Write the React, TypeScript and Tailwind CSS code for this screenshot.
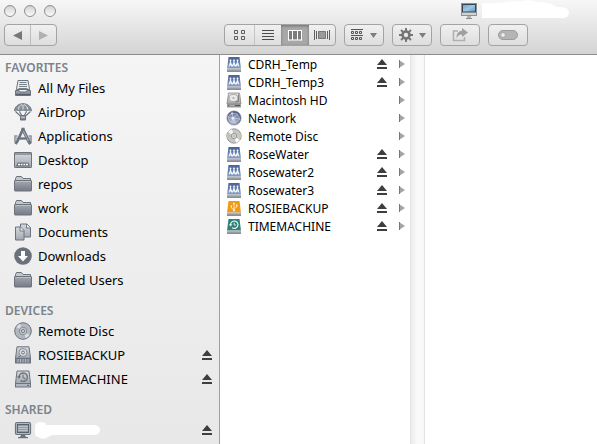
import React, { useState } from "react";

type IconProps = { className?: string };

const TONE = "#6b737e";

function Gradients() {
  return (
    <svg className="absolute h-0 w-0" aria-hidden="true">
      <defs>
        <linearGradient id="slate" x1="0" y1="0" x2="0" y2="1">
          <stop offset="0" stopColor="#a4a9b1" />
          <stop offset="1" stopColor="#747b85" />
        </linearGradient>
        <linearGradient id="pale" x1="0" y1="0" x2="0" y2="1">
          <stop offset="0" stopColor="#d6d9dd" />
          <stop offset="1" stopColor="#a3a9b1" />
        </linearGradient>
        <linearGradient id="blue" x1="0" y1="0" x2="0" y2="1">
          <stop offset="0" stopColor="#456397" />
          <stop offset="1" stopColor="#86a0c8" />
        </linearGradient>
        <linearGradient id="metal" x1="0" y1="0" x2="0" y2="1">
          <stop offset="0" stopColor="#e2e2e2" />
          <stop offset="1" stopColor="#a5a5a5" />
        </linearGradient>
        <radialGradient id="globe" cx="0.45" cy="0.7" r="0.7">
          <stop offset="0" stopColor="#c3c9dc" />
          <stop offset="0.6" stopColor="#7d87a8" />
          <stop offset="1" stopColor="#4a5478" />
        </radialGradient>
        <linearGradient id="screen" x1="0" y1="0" x2="1" y2="1">
          <stop offset="0" stopColor="#6ba0c8" />
          <stop offset="0.5" stopColor="#9cc9e6" />
          <stop offset="1" stopColor="#5a91bd" />
        </linearGradient>
      </defs>
    </svg>
  );
}

function SideIcon({ children }: { children: React.ReactNode }) {
  return (
    <svg viewBox="0 0 18 18" className="h-[18px] w-[18px] shrink-0" fill="none" aria-hidden="true">
      {children}
    </svg>
  );
}

const AllFiles = () => (
  <SideIcon>
    <path d="M4 1.500h10l1.600 9H2.400z" fill="#eceef0" stroke={TONE} />
    <path d="M5.500 3.500h7M5 5.500h8M5 7.500h8M4.500 9.500h9" stroke={TONE} strokeWidth="0.900" />
    <path d="M1.500 11.500h3.500l1 1.500h6l1-1.500h3.500v5h-15z" fill="url(#slate)" stroke={TONE} />
    <path d="M2 15.500h14" stroke="#555d68" />
  </SideIcon>
);
const AirDrop = () => (
  <SideIcon>
    <path d="M.6 7.800C.8 3.600 4.400.7 9 .7s8.200 2.900 8.400 7.100C16 6.700 14 6.800 12.600 8 11.300 6.800 6.700 6.800 5.400 8 4 6.800 2 6.700.6 7.800z" fill="#8b929b" stroke={TONE} />
    <path d="M8 1.500C5.500 2.500 4.500 4.500 4.300 6.500M10 1.500c2.500 1 3.500 3 3.700 5M9 1.500V6.500" stroke="#dfe2e5" strokeWidth="1" />
    <path d="M1.500 8.500l5.500 5M16.500 8.500l-5.500 5M5.500 8.500l2.500 4.500M12.500 8.500L10 13" stroke={TONE} strokeWidth="1.100" />
    <path d="M6.500 12.500h5v4.500h-5z" fill="url(#slate)" stroke={TONE} />
    <path d="M7 14.500h4" stroke="#cdd1d5" strokeWidth="0.700" />
  </SideIcon>
);
const Apps = () => (
  <SideIcon>
    <path d="M1 15.500V9h2.500M17 15.500V9h-2.500" stroke="#8d949d" strokeWidth="1.600" />
    <path d="M.5 11.500h17" stroke="#a3a9b1" strokeWidth="2" />
    <path d="M9 2L3.500 14 1.500 17" stroke={TONE} strokeWidth="2.600" />
    <path d="M8.500 1.500L14.500 14l2 3" stroke={TONE} strokeWidth="3.200" />
    <path d="M9.400 4l5 10" stroke="#b4bac1" strokeWidth="1" />
    <path d="M5 11.500h8" stroke={TONE} strokeWidth="2" />
    <path d="M7.500 1.500h3" stroke={TONE} strokeWidth="1.500" />
  </SideIcon>
);
const Desktop = () => (
  <SideIcon>
    <rect x="0.500" y="1.500" width="17" height="15" rx="0.500" fill="url(#pale)" stroke={TONE} />
    <path d="M1 3h16" stroke={TONE} strokeWidth="1.200" />
    <path d="M3.500 11.500h11l1.500 4H2z" fill="#6b737e" />
    <path d="M4 13.500h2M6.800 13.500h1.700M9.500 13.500h1.700M12 13.500h2" stroke="#fff" strokeWidth="1.600" />
  </SideIcon>
);
const Folder = () => (
  <SideIcon>
    <path d="M1.500 5.500v-2l1-2h5l1.500 2h7.500v2z" fill="#c3c7cc" stroke={TONE} />
    <rect x="0.500" y="5.500" width="17" height="10.500" rx="0.500" fill="url(#slate)" stroke={TONE} />
    <path d="M1.200 6.500h15.600" stroke="#c3c7cc" strokeWidth="0.800" />
  </SideIcon>
);
const Docs = () => (
  <SideIcon>
    <path d="M6.500 1h6.500l3.500 3.500V14h-10z" fill="url(#pale)" stroke={TONE} />
    <path d="M12.500 1v4h4" fill="#e9ebed" stroke={TONE} strokeWidth="0.900" />
    <path d="M1.500 4h5L10 7.500V17H1.500z" fill="url(#pale)" stroke={TONE} />
    <path d="M6 4v4h4" fill="#e9ebed" stroke={TONE} strokeWidth="0.900" />
  </SideIcon>
);
const Down = () => (
  <SideIcon>
    <circle cx="9" cy="9" r="8.800" fill="#69717c" />
    <path d="M7 4h4v5h3l-5 5.500L4 9h3z" fill="#fff" />
  </SideIcon>
);
const Disc = () => (
  <SideIcon>
    <circle cx="9" cy="9" r="8.300" fill="#b3b8bf" stroke={TONE} />
    <path d="M9 9L2.500 5A8 8 0 0 1 6 1.800zM9 9l6.500 4a8 8 0 0 1-3.500 3.200z" fill="#eceef0" opacity="0.700" />
    <circle cx="9" cy="9" r="3.800" stroke="#858d97" fill="#c3c7cc" />
    <circle cx="9" cy="9" r="1.500" fill="#eee" stroke={TONE} />
  </SideIcon>
);
const Drive = () => (
  <SideIcon>
    <path d="M3 .8h12l1.500 11.500H1.500z" fill="url(#pale)" stroke={TONE} />
    <circle cx="9" cy="6.500" r="4" fill="#dde0e3" stroke="#848c96" />
    <circle cx="9" cy="6.500" r="1.500" stroke={TONE} />
    <path d="M4 11.500l3-2" stroke={TONE} />
    <rect x="1.500" y="12.500" width="15" height="4.500" fill="#7b828c" stroke={TONE} />
    <path d="M4 13v3.500M6.500 13v3.500M9 13v3.500M11.500 13v3.500M14 13v3.500" stroke="#c6cace" strokeWidth="0.800" />
  </SideIcon>
);
const Clock = () => (
  <SideIcon>
    <path d="M3 1h12l1.500 12.500H1.500z" fill="url(#pale)" stroke={TONE} />
    <rect x="1.500" y="13.500" width="15" height="3.500" fill="#b3b8bf" stroke={TONE} />
    <path d="M5 7a4.200 4.200 0 1 1 1.500 3.400" stroke={TONE} strokeWidth="1.400" />
    <path d="M3 6.200h4L5 9z" fill={TONE} />
    <path d="M9 4.500v3l2.200 1.200" stroke={TONE} strokeWidth="1.100" />
    <path d="M13 15.300h2" stroke="#59616c" />
  </SideIcon>
);
const Monitor = () => (
  <SideIcon>
    <rect x="1.500" y="1.500" width="15" height="12" rx="1.500" fill="#b4bac1" stroke={TONE} strokeWidth="1.200" />
    <rect x="3.500" y="3.500" width="11" height="8" fill="#949ba4" stroke="#59616c" />
    <path d="M4 5.500h10M4 7.500h10M4 9.500h10" stroke="#c3c7cc" strokeWidth="0.900" />
    <path d="M7 14h4l1 2h2v1.300H4V16h2z" fill={TONE} />
  </SideIcon>
);

function SmallIcon({ children }: { children: React.ReactNode }) {
  return (
    <svg viewBox="0 0 16 16" className="h-4 w-4 shrink-0" fill="none" aria-hidden="true">
      {children}
    </svg>
  );
}
function DriveBase({ fill, children }: { fill: string; children: React.ReactNode }) {
  return (
    <SmallIcon>
      <path d="M2.500 1h11L15 13H1z" fill={fill} />
      <path d="M1 12.500h14V15.500H1z" fill="#a3a7ab" />
      <path d="M1 12.800h14" stroke="#dfe3e6" strokeWidth="0.700" />
      <path d="M1 15.300h14" stroke="#62666b" strokeWidth="0.800" />
      {children}
    </SmallIcon>
  );
}
const Server = () => (
  <DriveBase fill="url(#blue)">
    <path d="M4.500 4l.8 3 1.500 3.500H5.300L4.500 9l-.8 1.500H2.500L3.700 7zM8 4l.8 3 1.400 3.500H8.800L8 9l-.8 1.500H5.800L7.200 7zM11.500 4l.8 3 1.200 3.500h-1.200L11.500 9l-.8 1.500H9.200L10.700 7z" fill="#f3f7fc" />
    <circle cx="4.500" cy="4.500" r="0.900" fill="#fff" />
    <circle cx="8" cy="4.500" r="0.900" fill="#fff" />
    <circle cx="11.500" cy="4.500" r="0.900" fill="#fff" />
  </DriveBase>
);
const HardDisk = () => (
  <SmallIcon>
    <path d="M2.500 1h11L15 12H1z" fill="url(#metal)" stroke="#777" strokeWidth="0.700" />
    <ellipse cx="7.500" cy="6" rx="4.300" ry="3.600" fill="#e8e8e8" stroke="#a0a0a0" strokeWidth="0.800" />
    <circle cx="7.500" cy="6" r="1.100" fill="#aaa" />
    <path d="M12.500 2.500v7L9.500 10" stroke="#777" strokeWidth="0.900" />
    <path d="M1 11.500h14v4H1z" fill="#9a9a9a" />
    <path d="M2 13.500h12" stroke="#555" strokeWidth="1.200" />
    <path d="M3 13.500h6" stroke="#d4d4d4" strokeWidth="0.700" />
  </SmallIcon>
);
const Network = () => (
  <SmallIcon>
    <circle cx="8" cy="8" r="7.100" fill="url(#globe)" stroke="#5c6688" strokeWidth="0.500" />
    <path d="M2 7l4-4 5 1 3 5-5 4-5-1zM6 3l1 5 5-4M7 8l2 5M2.500 7L7 8l7 1" stroke="#dde2f0" strokeWidth="0.600" opacity="0.800" />
    <circle cx="6" cy="3.500" r="1.100" fill="#dbe1f0" />
    <circle cx="7" cy="8.200" r="1.300" fill="#eef1f8" />
  </SmallIcon>
);
const ColorDisc = () => (
  <SmallIcon>
    <circle cx="8" cy="8" r="7.200" fill="#c6c6c6" stroke="#858585" strokeWidth="0.800" />
    <path d="M8 8L2 4a7 7 0 0 1 4-2.700z" fill="#f5f5f5" />
    <path d="M8 8l6 4a7 7 0 0 1-4 2.700z" fill="#f7f7f7" />
    <path d="M8 8l6.800-2a7 7 0 0 1 0 3.600z" fill="#d3c9a2" />
    <path d="M8 8l-6.800 2a7 7 0 0 1 0-3.600z" fill="#b9c8b1" />
    <circle cx="8" cy="8" r="2.700" fill="#e5e5e5" stroke="#888" strokeWidth="0.800" />
    <circle cx="8" cy="8" r="1.100" fill="#fff" stroke="#888" strokeWidth="0.600" />
  </SmallIcon>
);
const Usb = () => (
  <DriveBase fill="#f09a16">
    <path d="M8 11V3.500M8 9.500L5.300 8V6M8 8.500l2.700-1.300V5" stroke="#ffe9b8" strokeWidth="0.900" />
    <path d="M6.700 4.300L8 2.300l1.300 2z" fill="#fff4d8" />
    <circle cx="8" cy="10.500" r="1" fill="#fff4d8" />
    <circle cx="5.300" cy="6" r="0.800" fill="#fff4d8" />
    <path d="M10 4.500h1.400V6H10z" fill="#fff4d8" />
  </DriveBase>
);
const TimeMachine = () => (
  <DriveBase fill="#2f7f78">
    <path d="M4.600 6.800A3.700 3.700 0 1 1 6 9.600" stroke="#e4f5f1" strokeWidth="1.200" />
    <path d="M2.800 6.200h3.500L4.600 8.600z" fill="#e4f5f1" />
    <path d="M8.200 4.700v2.300h1.900" stroke="#e4f5f1" strokeWidth="0.900" />
  </DriveBase>
);

function Eject({ className = "" }: IconProps) {
  return (
    <svg viewBox="0 0 10 10" className={`h-[10px] w-[10px] ${className}`} fill="#3e3e3e" aria-hidden="true">
      <path d="M5 0l5 6H0zM0 8h10v2H0z" />
    </svg>
  );
}

const favorites = [
  { name: "All My Files", Icon: AllFiles },
  { name: "AirDrop", Icon: AirDrop },
  { name: "Applications", Icon: Apps },
  { name: "Desktop", Icon: Desktop },
  { name: "repos", Icon: Folder },
  { name: "work", Icon: Folder },
  { name: "Documents", Icon: Docs },
  { name: "Downloads", Icon: Down },
  { name: "Deleted Users", Icon: Folder },
];
const devices = [
  { name: "Remote Disc", Icon: Disc },
  { name: "ROSIEBACKUP", Icon: Drive, eject: true },
  { name: "TIMEMACHINE", Icon: Clock, eject: true },
];
const shared = [{ name: "", Icon: Monitor, eject: true }];

const volumes = [
  { name: "CDRH_Temp", Icon: Server, eject: true },
  { name: "CDRH_Temp3", Icon: Server, eject: true },
  { name: "Macintosh HD", Icon: HardDisk },
  { name: "Network", Icon: Network },
  { name: "Remote Disc", Icon: ColorDisc },
  { name: "RoseWater", Icon: Server, eject: true },
  { name: "Rosewater2", Icon: Server, eject: true },
  { name: "Rosewater3", Icon: Server, eject: true },
  { name: "ROSIEBACKUP", Icon: Usb, eject: true },
  { name: "TIMEMACHINE", Icon: TimeMachine, eject: true },
];

type Place = { name: string; Icon: () => React.JSX.Element; eject?: boolean };

function Section({ title, places }: { title: string; places: Place[] }) {
  return (
    <section>
      <h2 className="h-[18px] pl-[5px] text-xs leading-5 font-semibold text-[#7b838c]">{title}</h2>
      <ul>
        {places.map(({ name, Icon, eject }) => (
          <li key={name} className="flex h-6 items-center pr-[7px] pl-[14px]">
            <button
              type="button"
              aria-label={name || "Shared computer"}
              className="flex grow items-center gap-[6px] text-left"
            >
              <Icon />
              {name ? (
                <span className="pt-0.5">{name}</span>
              ) : (
                <svg viewBox="0 0 66 17" className="h-[17px] w-[66px] overflow-visible" fill="#fff" aria-hidden="true">
                  <path d="M-3 5Q-3 0 3 0q5 0 5 3l47 0q7 0 7 5 0 5-7 5l-41 0-6 3Q4 18 0 15-3 14-3 11z" />
                </svg>
              )}
            </button>
            {eject && (
              <button type="button" aria-label={`Eject ${name}`}>
                <Eject />
              </button>
            )}
          </li>
        ))}
      </ul>
    </section>
  );
}

const toolButton =
  "flex h-[22px] w-10 items-center justify-center rounded-[4px] border border-[#a3a3a3] bg-linear-to-b from-[#f0f0f0] to-[#dedede]";

const Caret = () => (
  <svg viewBox="0 0 7 5" className="h-[5px] w-[7px]" fill="#7d7d7d" aria-hidden="true">
    <path d="M0 0h7L3.500 5z" />
  </svg>
);

const views = [
  {
    label: "Icons",
    width: "w-[29px]",
    art: (
      <svg viewBox="0 0 11 10" className="h-[10px] w-[11px]" fill="none" stroke="#5c5c5c" aria-hidden="true">
        <path d="M.5.5h3v3h-3zM7.500.5h3v3h-3zM.5 6.500h3v3h-3zM7.500 6.500h3v3h-3z" />
      </svg>
    ),
  },
  {
    label: "List",
    width: "w-[27px]",
    art: (
      <svg viewBox="0 0 12 10" className="h-[10px] w-3" stroke="#4c4c4c" aria-hidden="true">
        <path d="M0 .5h12M0 3.500h12M0 6.500h12M0 9.500h12" />
      </svg>
    ),
  },
  {
    label: "Columns",
    width: "w-[28px]",
    art: (
      <svg viewBox="0 0 14 12" className="h-3 w-[14px]" fill="none" aria-hidden="true">
        <path d="M.5 1.500h13v9H.5z" fill="#7b7b7b" />
        <path d="M.5 1v10.500M4.500 1v10M9.500 1v10M13.500 1v10.500M0 1.500h14M0 11h14" stroke="#fff" />
      </svg>
    ),
  },
  {
    label: "Cover Flow",
    width: "w-[26px]",
    art: (
      <svg viewBox="0 0 16 12" className="h-3 w-4" fill="none" stroke="#5f5f5f" aria-hidden="true">
        <path d="M.5 1v10M2.500 2v8M13.500 2v8M15.500 1v10" />
        <path d="M4.500 2.500h7v7h-7z" fill="#999" stroke="#777" />
      </svg>
    ),
  },
];

export default function App() {
  const [view, setView] = useState("Columns");
  return (
    <div className="flex h-screen flex-col overflow-hidden bg-white font-['Noto_Sans','Open_Sans',sans-serif] text-[13px] text-black">
      <Gradients />
      <header className="shrink-0 border-b border-[#8c8c8c] bg-linear-to-b from-[#f7f7f7] to-[#d4d4d4] pb-2 pl-1">
        <div className="flex h-6 items-start">
          <div className="flex gap-2 pt-[5px]">
            {["Close", "Minimize", "Zoom"].map((label) => (
              <button
                key={label}
                type="button"
                aria-label={label}
                className="h-3 w-3 rounded-full border border-[#8f8f8f] bg-linear-to-b from-[#d2d2d2] to-[#fbfbfb]"
              />
            ))}
          </div>
          <div className="ml-[405px] flex gap-[2px]">
            <svg viewBox="0 0 16 16" className="mt-[3px] h-4 w-4" fill="none" aria-hidden="true">
              <rect x="0.500" y="0.500" width="15" height="12" fill="#d2d2d2" stroke="#8d9195" />
              <rect x="1.500" y="1.500" width="13" height="7.500" fill="url(#screen)" stroke="#3c4650" />
              <path d="M6 13h4v2H6z" fill="#b4b4b4" />
              <path d="M5 15.500h6" stroke="#8a8a8a" />
            </svg>
            <svg viewBox="0 0 90 20" className="h-5 w-[90px]" fill="#fff" aria-hidden="true">
              <path d="M3 3.500q12 0 21-1 8-2 18-1Q50-1 58 2q12 0 20 5 12-1 12 6-1 6-8 5l-6 0H3Z" />
            </svg>
          </div>
        </div>
        <div className="flex gap-2">
          <div className="flex h-[22px] w-[53px] rounded-[4px] border border-[#a3a3a3] bg-linear-to-b from-[#f0f0f0] to-[#dedede]">
            <button type="button" aria-label="Back" className="flex flex-1 items-center justify-center border-r border-[#bcbcbc]">
              <svg viewBox="0 0 9 9" className="h-[9px] w-[9px]" fill="#777" aria-hidden="true">
                <path d="M9 0v9L0 4.500z" />
              </svg>
            </button>
            <button type="button" aria-label="Forward" className="flex flex-1 items-center justify-center">
              <svg viewBox="0 0 9 9" className="h-[9px] w-[9px]" fill="#b0b0b0" aria-hidden="true">
                <path d="M0 0v9l9-4.500z" />
              </svg>
            </button>
          </div>
          <div className="ml-[159px] flex h-[22px] w-28 overflow-hidden rounded-[4px] border border-[#a3a3a3] bg-linear-to-b from-[#f0f0f0] to-[#dedede]">
            {views.map(({ label, width, art }) => (
              <button
                key={label}
                type="button"
                aria-label={label}
                aria-pressed={view === label}
                onClick={() => setView(label)}
                className={`flex items-center justify-center ${width} ${
                  view === label
                    ? "bg-[#a8a8a8] shadow-[inset_0_1px_3px_#707070]"
                    : label === "List"
                      ? "border-l border-[#c4c4c4]"
                      : ""
                }`}
              >
                {art}
              </button>
            ))}
          </div>
          <button type="button" aria-label="Arrange" className={`${toolButton} gap-[7px]`}>
            <svg viewBox="0 0 12 12" className="h-3 w-3" fill="none" stroke="#555" aria-hidden="true">
              <path d="M0 .5h12M0 6.500h12" />
              <path d="M.5 2.500h2v2h-2zM4.500 2.500h2v2h-2zM8.500 2.500h2v2h-2zM.5 8.500h2v2h-2zM4.500 8.500h2v2h-2zM8.500 8.500h2v2h-2z" />
            </svg>
            <Caret />
          </button>
          <button type="button" aria-label="Action" className={`${toolButton} gap-[6px]`}>
            <svg viewBox="0 0 14 14" className="h-[14px] w-[14px]" fill="none" stroke="#747474" aria-hidden="true">
              <circle cx="7" cy="7" r="3.500" strokeWidth="2.600" />
              <path d="M7 0v3M7 11v3M0 7h3M11 7h3M2 2l2.200 2.200M9.800 9.800L12 12M2 12l2.200-2.200M9.800 4.200L12 2" strokeWidth="1.900" />
            </svg>
            <Caret />
          </button>
          <button type="button" aria-label="Share" className={toolButton}>
            <svg viewBox="0 0 16 14" className="h-[14px] w-4" fill="none" aria-hidden="true">
              <path d="M6 3H1.500V12.500h11V9" stroke="#b0b0b0" strokeWidth="1.600" />
              <path d="M10 0l6 4.500L10 9V6.500C7.500 6.500 6 7.500 4.500 10 4.500 5.500 6.500 3 10 2.800z" fill="#a0a0a0" />
            </svg>
          </button>
          <button type="button" aria-label="Edit tags" className={toolButton}>
            <svg viewBox="0 0 20 10" className="h-[10px] w-5" aria-hidden="true">
              <rect x="0.500" y="0.500" width="19" height="9" rx="4.500" fill="#b4b4b4" stroke="#9c9c9c" />
              <circle cx="5" cy="5" r="2.300" fill="#eee" stroke="#999" strokeWidth="0.600" />
            </svg>
          </button>
        </div>
      </header>
      <div className="flex min-h-0 grow">
        <nav
          aria-label="Places"
          className="flex w-[220px] shrink-0 flex-col gap-[9px] overflow-hidden border-r border-[#a0a0a0] bg-linear-to-b from-[#f5f5f5] to-[#e8e8e8] pt-[3px]"
        >
          <Section title="FAVORITES" places={favorites} />
          <Section title="DEVICES" places={devices} />
          <Section title="SHARED" places={shared} />
        </nav>
        <main className="flex grow text-xs">
          <ul className="w-[190px] shrink-0">
            {volumes.map(({ name, Icon, eject }) => (
              <li key={name} className="flex h-[18px] items-center pr-[5px] pl-[6px]">
                <button type="button" className="flex grow items-center gap-[6px] text-left">
                  <Icon />
                  <span className="pt-0.5">{name}</span>
                </button>
                {eject && (
                  <button type="button" aria-label={`Eject ${name}`} className="mr-3">
                    <Eject />
                  </button>
                )}
                <svg viewBox="0 0 6 8" className="h-2 w-[6px]" fill="#a5a5a5" aria-hidden="true">
                  <path d="M0 0l6 4-6 4z" />
                  <path d="M0 0h1v8H0z" fill="#777" />
                </svg>
              </li>
            ))}
          </ul>
          <div className="w-[15px] shrink-0 border-x border-[#e4e4e4] bg-linear-to-r from-[#ececec] via-[#fafafa] to-[#f7f7f7]" />
        </main>
      </div>
    </div>
  );
}
